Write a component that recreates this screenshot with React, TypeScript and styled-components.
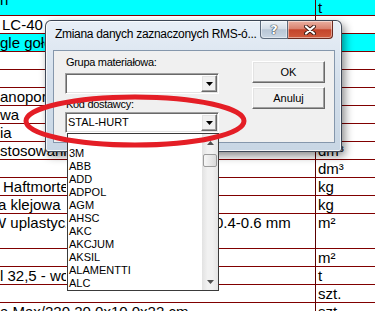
import React from 'react';
import styled, { createGlobalStyle } from 'styled-components';

const GlobalStyle = createGlobalStyle`
    html, body {
        margin: 0;
        padding: 0;
        background: #fff;
    }
`;

const Screen = styled.div`
    position: relative;
    width: 375px;
    height: 311px;
    overflow: hidden;
    font-family: 'Liberation Sans', Arial, sans-serif;
`;

/* ---------- spreadsheet behind the dialog ---------- */

const Sheet = styled.div`
    display: grid;
    grid-template-columns: 316px 1fr;
`;

const Cell = styled.div<{ $h: number; $cyan?: boolean; $top?: boolean; $first?: boolean }>`
    height: ${({ $h }) => $h}px;
    box-sizing: border-box;
    display: flex;
    align-items: ${({ $top }) => ($top ? 'flex-start' : 'center')};
    padding-left: ${({ $first }) => ($first ? 0 : 2)}px;
    border-bottom: 1px solid #800000;
    border-right: ${({ $first }) => ($first ? '1px solid #5a0000' : 'none')};
    background: ${({ $cyan }) => ($cyan ? '#00ffff' : '#fff')};
    color: #000;
    font-size: 15px;
    line-height: 18px;
    white-space: nowrap;
    overflow: hidden;
`;

// the visible part of a long cell text, the rest lies under the dialog
const Clip = styled.span<{ $w: number; $lift?: number }>`
    display: inline-block;
    width: ${({ $w }) => $w}px;
    margin-top: ${({ $lift }) => ($lift ? -$lift : 0)}px;
    overflow: hidden;
    flex-shrink: 0;
`;

const CellText = styled.span<{ $indent?: number }>`
    display: inline-block;
    margin-left: ${({ $indent }) => $indent ?? 0}px;
`;

const Tail = styled.span<{ $gap: number }>`
    margin-left: ${({ $gap }) => $gap}px;
`;

type Row = {
    h: number;
    left: string;
    right?: string;
    cyan?: boolean;
    top?: boolean;
    indent?: number;
    lift?: number;
    clip?: number;
    tail?: string;
};

const rows: Row[] = [
    { h: 16, left: 'n', right: 't', cyan: true, lift: 9, clip: 45 },
    { h: 18, left: 'LC-40', indent: 2, clip: 45 },
    { h: 18, left: 'gle gołe', cyan: true, clip: 45 },
    { h: 18, left: '' },
    { h: 18, left: '' },
    { h: 18, left: 'anoporfir', clip: 45 },
    { h: 18, left: 'wa', clip: 45 },
    { h: 18, left: 'ia', clip: 45 },
    { h: 18, left: 'stosowania', right: 'dm³', clip: 66 },
    { h: 18, left: '', right: 'dm³' },
    { h: 18, left: 'Haftmortel', right: 'kg', indent: 3, clip: 66 },
    { h: 18, left: 'a klejowa', right: 'kg', indent: -2, clip: 66 },
    { h: 35, left: 'W uplastycz', right: 'm²', top: true, indent: -8, clip: 66, tail: '0.4-0.6 mm' },
    { h: 18, left: '', right: 'm²' },
    { h: 18, left: 'l 32,5 - wo', right: 't', clip: 66 },
    { h: 18, left: '', right: 'szt.' },
    { h: 18, left: 'a Max/220.20.0x10.0x22 cm', right: 'szt.', clip: 310 },
];

/* ---------- dialog window ---------- */

const Window = styled.div`
    position: absolute;
    left: 45px;
    top: 20px;
    width: 297px;
    height: 132px;
    box-sizing: border-box;
    display: flex;
    flex-direction: column;
    padding: 0 6px 8px 7px;
    border: 1px solid rgba(35, 45, 60, 0.85);
    border-radius: 6px 6px 3px 3px;
    background: linear-gradient(180deg, #e8eff7 0%, #d5e0ec 45%, #c8d6e4 100%);
    box-shadow: inset 0 0 0 1px rgba(255, 255, 255, 0.75), 3px 4px 9px rgba(0, 0, 0, 0.45);
`;

const TitleBar = styled.div`
    height: 29px;
    display: flex;
    align-items: flex-start;
`;

const Title = styled.div`
    flex: 1;
    padding: 6px 0 0 2px;
    font-size: 12px;
    line-height: 14px;
    letter-spacing: -0.3px;
    color: #000;
    white-space: nowrap;
    overflow: hidden;
`;

const CaptionButtons = styled.div`
    display: flex;
    margin-right: 2px;
`;

const CaptionButton = styled.div<{ $close?: boolean }>`
    width: ${({ $close }) => ($close ? 45 : 28)}px;
    height: 18px;
    box-sizing: border-box;
    display: flex;
    align-items: center;
    justify-content: center;
    border: 1px solid ${({ $close }) => ($close ? '#6b2a20' : '#5d6b7c')};
    border-top: none;
    border-left-width: ${({ $close }) => ($close ? 0 : 1)}px;
    border-radius: ${({ $close }) => ($close ? '0 0 4px 0' : '0 0 0 4px')};
    background: ${({ $close }) =>
        $close
            ? 'linear-gradient(180deg, #eab0a2 0%, #d9826f 45%, #c4442b 52%, #cf5a3c 100%)'
            : 'linear-gradient(180deg, #edf2f7 0%, #d4dde7 45%, #b8c6d5 52%, #c9d6e3 100%)'};
    box-shadow: inset 0 0 0 1px rgba(255, 255, 255, 0.45);
`;

const HelpGlyph = styled.span`
    font-family: 'DejaVu Sans', sans-serif;
    font-weight: bold;
    font-size: 13px;
    line-height: 13px;
    color: #fff;
    text-shadow: 0 0 1px #2b3440, 0 0 1px #2b3440, 0 0 1px #2b3440;
`;

const Client = styled.div`
    flex: 1;
    display: flex;
    justify-content: space-between;
    align-items: flex-start;
    padding: 5px 9px 0 11px;
    border: 1px solid #8597ac;
    background: #f0f0f0;
`;

const Form = styled.div`
    width: 154px;
    display: flex;
    flex-direction: column;
`;

const Label = styled.div<{ $gap: number }>`
    height: 13px;
    margin-bottom: ${({ $gap }) => $gap}px;
    padding-left: 1px;
    font-size: 11px;
    line-height: 13px;
    letter-spacing: -0.3px;
    color: #000;
    white-space: nowrap;
`;

const Combo = styled.div<{ $gap?: number }>`
    position: relative;
    height: 21px;
    box-sizing: border-box;
    margin-bottom: ${({ $gap }) => $gap ?? 0}px;
    display: flex;
    align-items: center;
    padding: 1px;
    border: 1px solid;
    border-color: #a0a0a0 #fff #fff #a0a0a0;
    box-shadow: inset 1px 1px 0 #696969, inset -1px -1px 0 #e3e3e3;
    background: #fff;
`;

const ComboText = styled.div`
    flex: 1;
    padding-left: 1px;
    font-size: 11px;
    line-height: 17px;
    color: #000;
`;

const Raised = styled.div`
    box-sizing: border-box;
    display: flex;
    align-items: center;
    justify-content: center;
    background: #f0f0f0;
    border: 1px solid;
    border-color: #fff #696969 #696969 #fff;
    box-shadow: inset -1px -1px 0 #a0a0a0, inset 1px 1px 0 #e3e3e3;
`;

const ArrowButton = styled(Raised)`
    width: 16px;
    height: 17px;
`;

const Buttons = styled.div`
    margin-top: 5px;
    display: flex;
    flex-direction: column;
    gap: 4px;
`;

const PushButton = styled(Raised)`
    width: 73px;
    height: 22px;
    font-size: 11px;
    color: #000;
`;

/* ---------- opened drop-down list ---------- */

const DropList = styled.div`
    position: absolute;
    top: calc(100% + 1px);
    left: 1px;
    right: -1px;
    height: 158px;
    box-sizing: border-box;
    display: flex;
    border: 1px solid #3a3a3a;
    background: #fff;
    z-index: 2;
`;

const Items = styled.div`
    flex: 1;
    display: flex;
    flex-direction: column;
`;

const Item = styled.div`
    height: 13px;
    padding-left: 1px;
    font-size: 11px;
    line-height: 13px;
    color: #000;
`;

const ScrollBar = styled.div`
    width: 16px;
    display: flex;
    flex-direction: column;
    background: linear-gradient(90deg, #e2e2e2 0%, #f1f1f1 35%, #f1f1f1 65%, #e4e4e4 100%);
`;

const ScrollArrow = styled.div`
    height: 17px;
    display: flex;
    align-items: center;
    justify-content: center;
`;

const Thumb = styled.div`
    height: 13px;
    margin: 3px 1px 0;
    box-sizing: border-box;
    border: 1px solid #9b9b9b;
    border-radius: 2px;
    background: linear-gradient(90deg, #f6f6f6 0%, #e9e9e9 50%, #dadada 100%);
`;

const Track = styled.div`
    flex: 1;
`;

const Marker = styled.svg`
    position: absolute;
    left: 0;
    top: 0;
    pointer-events: none;
    z-index: 5;
`;

const Triangle: React.FC<{ up?: boolean; color?: string }> = ({ up, color = '#000' }) => (
    <svg width="7" height="4" viewBox="0 0 7 4">
        <polygon points={up ? '0,4 7,4 3.5,0' : '0,0 7,0 3.5,4'} fill={color} />
    </svg>
);

const suppliers = ['', '3M', 'ABB', 'ADD', 'ADPOL', 'AGM', 'AHSC', 'AKC', 'AKCJUM', 'AKSIL', 'ALAMENTTI', 'ALC'];

export default function App() {
    return (
        <Screen>
            <GlobalStyle />
            <Sheet>
                {rows.map((r, i) => (
                    <React.Fragment key={i}>
                        <Cell $h={r.h} $cyan={r.cyan} $top={r.top || !!r.lift} $first>
                            {r.left && (
                                <Clip $w={r.clip ?? 300} $lift={r.lift}>
                                    <CellText $indent={r.indent}>{r.left}</CellText>
                                </Clip>
                            )}
                            {r.tail && <Tail $gap={149}>{r.tail}</Tail>}
                        </Cell>
                        <Cell $h={r.h} $cyan={r.cyan} $top={r.top}>
                            {r.right}
                        </Cell>
                    </React.Fragment>
                ))}
            </Sheet>

            <Window>
                <TitleBar>
                    <Title>Zmiana danych zaznaczonych RMS-ó...</Title>
                    <CaptionButtons>
                        <CaptionButton>
                            <HelpGlyph>?</HelpGlyph>
                        </CaptionButton>
                        <CaptionButton $close>
                            <svg width="12" height="10" viewBox="0 0 12 10">
                                <path d="M2 1.5 L10 8.5 M10 1.5 L2 8.5" stroke="#3a1a14" strokeWidth="4" strokeLinecap="round" />
                                <path d="M2 1.5 L10 8.5 M10 1.5 L2 8.5" stroke="#fff" strokeWidth="2.2" strokeLinecap="round" />
                            </svg>
                        </CaptionButton>
                    </CaptionButtons>
                </TitleBar>
                <Client>
                    <Form>
                        <Label $gap={4}>Grupa materiałowa:</Label>
                        <Combo $gap={4}>
                            <ComboText />
                            <ArrowButton>
                                <Triangle />
                            </ArrowButton>
                        </Combo>
                        <Label $gap={1}>Kod dostawcy:</Label>
                        <Combo>
                            <ComboText>STAL-HURT</ComboText>
                            <ArrowButton>
                                <Triangle />
                            </ArrowButton>
                            <DropList>
                                <Items>
                                    {suppliers.map((s, i) => (
                                        <Item key={i}>{s}</Item>
                                    ))}
                                </Items>
                                <ScrollBar>
                                    <ScrollArrow>
                                        <Triangle up color="#505050" />
                                    </ScrollArrow>
                                    <Thumb />
                                    <Track />
                                    <ScrollArrow>
                                        <Triangle color="#505050" />
                                    </ScrollArrow>
                                </ScrollBar>
                            </DropList>
                        </Combo>
                    </Form>
                    <Buttons>
                        <PushButton>OK</PushButton>
                        <PushButton>Anuluj</PushButton>
                    </Buttons>
                </Client>
            </Window>

            <Marker width="375" height="311" viewBox="0 0 375 311">
                <ellipse cx="135" cy="121" rx="109" ry="24" fill="none" stroke="#e41e26" strokeWidth="5" />
            </Marker>
        </Screen>
    );
}
